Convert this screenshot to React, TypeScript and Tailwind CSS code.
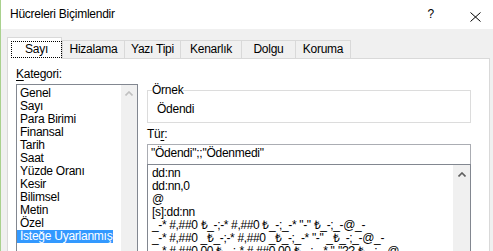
import React from "react";

const categories = [
  "Genel",
  "Sayı",
  "Para Birimi",
  "Finansal",
  "Tarih",
  "Saat",
  "Yüzde Oranı",
  "Kesir",
  "Bilimsel",
  "Metin",
  "Özel",
  "İsteğe Uyarlanmış",
];

const formats = [
  "dd:nn",
  "dd:nn,0",
  "@",
  "[s]:dd:nn",
  '_-* #,##0 ₺_-;-* #,##0 ₺_-;_-* "-" ₺_-;_-@_-',
  '_-* #,##0 _₺_-;-* #,##0 _₺_-;_-* "-" _₺_-;_-@_-',
  '_-* #,##0.00 ₺_-;-* #,##0.00 ₺_-;_-* "-"?? ₺_-;_-@_-',
];

const tabs = [
  { label: "Hizalama", w: "w-[62px]" },
  { label: "Yazı Tipi", w: "w-[56px]" },
  { label: "Kenarlık", w: "w-[61px]" },
  { label: "Dolgu", w: "w-[54px]" },
];

function Chevron({ color }: { color: string }) {
  return (
    <svg width="8" height="5" viewBox="0 0 8 5" className="block">
      <polyline points="0.5,4.5 4,1 7.5,4.5" fill="none" stroke={color} strokeWidth="1.6" />
    </svg>
  );
}

export default function App() {
  return (
    <div className="w-[493px] h-[251px] overflow-hidden bg-[#f0f0f0] border-l border-[#a9d18e] font-['Liberation_Sans',Arial,sans-serif] text-[12px] leading-[13px] tracking-[-0.25px] text-black flex flex-col">
      {/* Title bar */}
      <div className="h-[29px] bg-white flex items-center pl-[9px] pr-[12px] shrink-0">
        <span>Hücreleri Biçimlendir</span>
        <span className="ml-auto">?</span>
        <svg width="11" height="10" viewBox="0 0 11 10" className="ml-[36px] mt-[4px]">
          <line x1="0.5" y1="0.5" x2="10.5" y2="9.5" stroke="#000" strokeWidth="1" />
          <line x1="10.5" y1="0.5" x2="0.5" y2="9.5" stroke="#000" strokeWidth="1" />
        </svg>
      </div>

      {/* Tabs */}
      <div className="flex items-end pl-[6px] pt-[8px] shrink-0 relative z-10">
        <div className="w-[55px] h-[22px] -mb-px bg-white border-l border-t border-r border-[#d9d9d9] pt-[3px] pl-[3px]">
          <div className="w-[51px] h-[17px] border border-dotted border-black flex items-center justify-center">
            Sayı
          </div>
        </div>
        {tabs.map((t) => (
          <div
            key={t.label}
            className={`${t.w} h-[18px] border-l border-t border-[#d9d9d9] bg-[#f0f0f0] flex items-center justify-center`}
          >
            {t.label}
          </div>
        ))}
        <div className="w-[56px] h-[18px] border-l border-t border-r border-[#d9d9d9] bg-[#f0f0f0] flex items-center justify-center">
          Koruma
        </div>
      </div>

      {/* Panel */}
      <div className="ml-[6px] w-[483px] h-[220px] shrink-0 border border-[#d9d9d9] bg-white flex gap-[9px] pl-[8px]">
        {/* Left column */}
        <div className="pt-[9px] flex flex-col">
          <div>
            <span className="underline underline-offset-[2px]">K</span>ategori:
          </div>
          <div className="mt-[3px] w-[122px] h-[180px] border border-[#828790] flex">
            <div className="flex-1 pt-[2px] flex flex-col items-start">
              {categories.map((c, i) =>
                i === categories.length - 1 ? (
                  <div key={c} className="bg-[#3399ff] text-white pl-[3px] pr-[1px] whitespace-nowrap">
                    {c}
                  </div>
                ) : (
                  <div key={c} className="pl-[3px] whitespace-nowrap">
                    {c}
                  </div>
                )
              )}
            </div>
            <div className="w-[16px] bg-[#f0f0f0] flex justify-center pt-[6px]">
              <Chevron color="#c0c0c0" />
            </div>
          </div>
        </div>

        {/* Right column */}
        <div className="w-[324px] pt-[31px] flex flex-col">
          <div className="relative h-[33px] border border-[#dcdcdc] pt-[12px] pl-[9px]">
            <span className="absolute top-[-7px] left-[4px] bg-white">Örnek</span>
            Ödendi
          </div>
          <div className="mt-[5px]">
            Tü<span className="underline underline-offset-[2px]">r</span>:
          </div>
          <div className="mt-[3px] h-[20px] border-l border-t border-r border-[#abadb3] pt-[2px] pl-[3px] whitespace-nowrap">
            "Ödendi";;"Ödenmedi"
          </div>
          <div className="h-[100px] border border-[#828790] flex">
            <div className="flex-1 pt-[2px] pl-[4px] overflow-hidden whitespace-nowrap tracking-[-0.35px]">
              {formats.map((f) => (
                <div key={f}>{f}</div>
              ))}
            </div>
            <div className="w-[17px] shrink-0 bg-[#f0f0f0] flex justify-center pt-[7px]">
              <Chevron color="#606060" />
            </div>
          </div>
        </div>
      </div>
    </div>
  );
}
